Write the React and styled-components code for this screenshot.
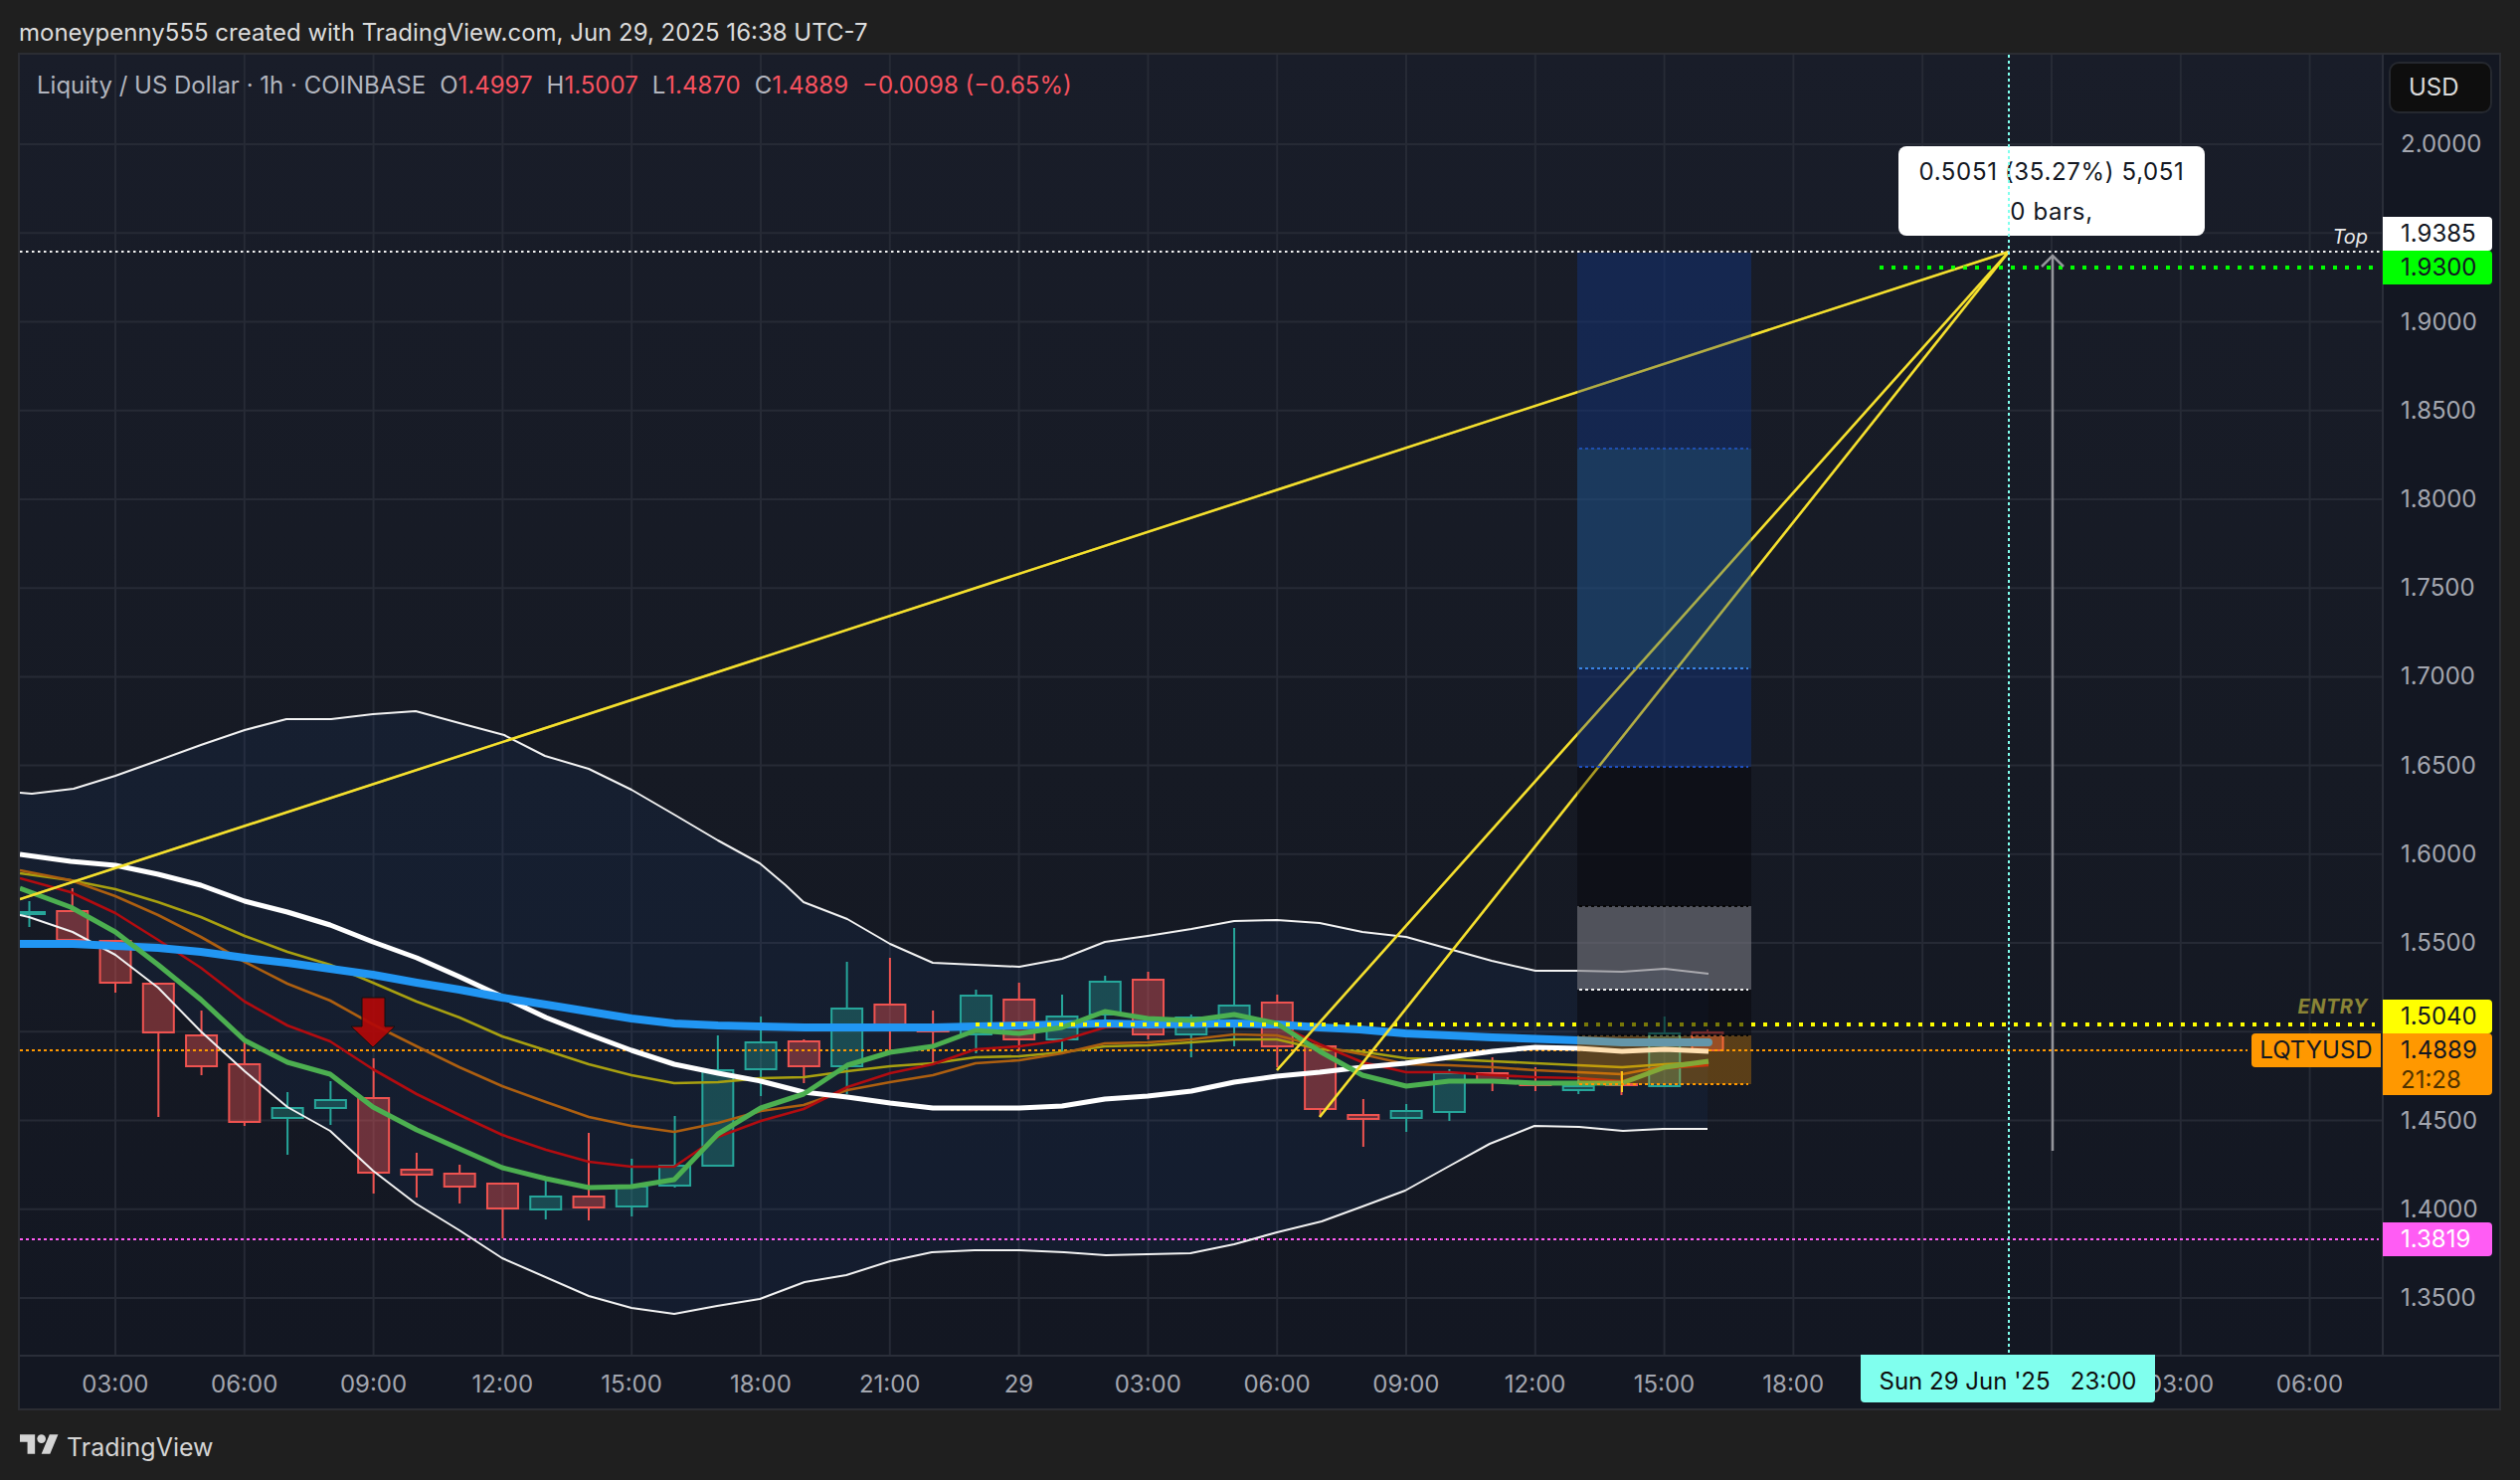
import React from "react"
import styled, { createGlobalStyle } from "styled-components"

const GlobalStyle = createGlobalStyle`
  html, body {
    margin: 0;
    background: #1f1f1f;
  }
  * {
    box-sizing: border-box;
  }
`

const hourX = (i) => 29.5 + 43.27 * i
const priceY = (k) => 145 + 89.23 * k

// [wick top, body top, body bottom, wick bottom, up?], one per hour starting at 01:00
const candles = [
  [906, 917, 919, 932, 1], [893, 916, 945, 945, 0], [946, 946, 988, 998, 0], [989, 989, 1038, 1123, 0],
  [1016, 1041, 1072, 1081, 0], [1047, 1070, 1128, 1132, 0], [1098, 1114, 1124, 1161, 1], [1087, 1106, 1114, 1131, 1],
  [1064, 1104, 1179, 1200, 0], [1159, 1176, 1181, 1204, 0], [1171, 1180, 1193, 1210, 0], [1190, 1190, 1215, 1245, 0],
  [1186, 1203, 1216, 1226, 1], [1139, 1203, 1214, 1227, 0], [1165, 1193, 1213, 1223, 1], [1122, 1172, 1192, 1194, 1],
  [1041, 1076, 1172, 1172, 1], [1022, 1048, 1075, 1102, 1], [1045, 1047, 1072, 1089, 0], [967, 1014, 1072, 1100, 1],
  [963, 1010, 1035, 1057, 0], [1016, 1036, 1037, 1069, 0], [995, 1001, 1040, 1059, 1], [988, 1005, 1045, 1056, 0],
  [1000, 1022, 1045, 1058, 1], [981, 987, 1020, 1027, 1], [977, 985, 1040, 1045, 0], [1020, 1023, 1040, 1063, 1],
  [933, 1011, 1030, 1052, 1], [1000, 1008, 1052, 1073, 0], [1052, 1052, 1115, 1123, 0], [1105, 1121, 1125, 1153, 0],
  [1110, 1117, 1124, 1138, 1], [1075, 1079, 1118, 1127, 1], [1063, 1079, 1087, 1097, 0], [1073, 1088, 1091, 1097, 0],
  [1082, 1092, 1096, 1100, 1], [1077, 1090, 1091, 1101, 0], [1022, 1039, 1092, 1092, 1], [1035, 1038, 1056, 1056, 0],
]

const upperBand = "20,797 32,798 74,793 116,780 158,765 202,749 246,734 288,723 333,723 375,718 418,715 462,727 507,739 548,760 592,773 635,794 678,819 722,845 764,868 790,890 808,907 852,924 895,949 938,968 981,970 1025,972 1068,964 1111,947 1154,941 1198,934 1241,926 1284,925 1327,928 1370,937 1414,942 1457,954 1500,966 1544,976 1587,976 1631,977 1674,974 1718,979"
const lowerBand = "20,920 29,922 73,937 116,960 159,993 202,1037 246,1077 289,1113 332,1137 375,1177 418,1210 462,1237 505,1265 592,1303 635,1315 678,1321 721,1313 764,1306 809,1289 851,1282 895,1268 937,1259 980,1257 1025,1257 1070,1259 1112,1262 1154,1261 1197,1260 1241,1251 1284,1239 1329,1228 1370,1213 1413,1197 1458,1172 1498,1150 1543,1132 1588,1133 1632,1137 1672,1135 1717,1135"
const basis = "20,859 71,866 116,870 159,879 202,890 246,906 289,917 332,930 375,947 419,963 462,982 505,1002 549,1023 592,1040 635,1056 678,1070 722,1079 765,1087 808,1098 852,1103 895,1109 938,1114 981,1114 1025,1114 1068,1112 1111,1105 1154,1102 1198,1097 1241,1088 1284,1082 1327,1078 1370,1073 1413,1069 1457,1063 1501,1057 1544,1053 1587,1054 1631,1057 1674,1055 1718,1057"
const longMa = "20,949 73,949 116,951 159,953 202,957 246,963 289,968 332,974 375,980 419,988 462,995 505,1003 549,1010 592,1017 635,1024 678,1029 722,1031 765,1032 809,1033 852,1033 938,1033 981,1032 1025,1031 1111,1029 1154,1030 1241,1029 1284,1030 1327,1033 1367,1035 1413,1039 1501,1043 1587,1046 1631,1048 1718,1048"
const greenMa = "20,893 71,912 116,937 159,970 202,1005 246,1046 289,1068 332,1080 375,1113 419,1136 462,1155 505,1174 549,1185 592,1194 635,1193 678,1186 722,1140 765,1114 808,1100 852,1071 895,1058 938,1052 981,1036 1025,1039 1068,1033 1111,1017 1154,1024 1198,1026 1241,1020 1284,1029 1327,1057 1370,1081 1414,1092 1457,1087 1501,1087 1544,1089 1587,1089 1631,1089 1674,1073 1718,1067"
const redMa = "20,883 71,897 116,918 159,945 202,973 246,1007 289,1031 332,1047 375,1075 419,1100 462,1121 505,1141 549,1156 592,1168 635,1173 678,1173 722,1143 765,1127 808,1115 852,1093 895,1079 938,1070 981,1055 1025,1052 1068,1046 1111,1033 1154,1030 1198,1029 1241,1027 1284,1030 1327,1050 1370,1068 1414,1078 1457,1078 1501,1081 1544,1083 1587,1084 1631,1087 1674,1074 1718,1071"
const brownMa = "20,875 71,885 116,901 159,920 202,942 246,967 289,989 332,1006 375,1030 419,1052 462,1073 505,1092 549,1108 592,1123 635,1132 678,1138 722,1129 765,1117 808,1111 852,1096 895,1088 938,1081 981,1069 1025,1066 1068,1059 1111,1049 1154,1048 1198,1045 1241,1040 1284,1041 1327,1052 1370,1060 1414,1070 1457,1071 1501,1073 1544,1076 1587,1078 1631,1080 1674,1072 1718,1069"
const oliveMa = "20,878 71,885 116,894 159,907 202,922 246,941 289,957 332,970 375,988 419,1007 462,1023 505,1042 549,1056 592,1070 635,1081 678,1089 722,1088 765,1084 808,1083 852,1077 895,1072 938,1069 981,1063 1025,1062 1068,1058 1111,1052 1154,1051 1198,1048 1241,1045 1284,1045 1327,1055 1367,1057 1414,1064 1457,1065 1501,1067 1544,1069 1587,1071 1631,1073 1674,1070 1718,1068"

// 1.9500 and 1.5000 sit behind the price tags, so they stay blank
const priceLabels = ["2.0000", "", "1.9000", "1.8500", "1.8000", "1.7500", "1.7000", "1.6500", "1.6000", "1.5500", "", "1.4500", "1.4000", "1.3500"]
// 21:00 and the 30th sit behind the cursor label
const timeLabels = ["03:00", "06:00", "09:00", "12:00", "15:00", "18:00", "21:00", "29", "03:00", "06:00", "09:00", "12:00", "15:00", "18:00", "", "", "03:00", "06:00"]

const Line = ({ points, color, width, cap = "butt" }) => (
  <polyline points={points} fill="none" stroke={color} strokeWidth={width} strokeLinejoin="round" strokeLinecap={cap} />
)

const Dots = ({ from, to, y, color, width = 2, dash = "3 3" }) => (
  <line x1={from} x2={to} y1={y} y2={y} stroke={color} strokeWidth={width} strokeDasharray={dash} />
)

const Candle = ({ i, data }) => {
  const [high, top, bottom, low, up] = data
  const x = hourX(i)
  const color = up ? "#26a69a" : "#ef5350"
  return (
    <g stroke={color} strokeWidth="2">
      <line x1={x} x2={x} y1={high} y2={top} />
      <line x1={x} x2={x} y1={bottom} y2={low} />
      <rect
        x={x - 15.5}
        y={top}
        width="31"
        height={bottom - top}
        fill={up ? "rgba(38,166,154,.33)" : "rgba(239,83,80,.4)"}
      />
    </g>
  )
}

const RayLines = ({ opacity }) => (
  <g stroke="#f5e02e" strokeWidth="2.5" fill="none" opacity={opacity}>
    <path d="M20 904L2020 253" />
    <path d="M1284 1076L2020 253" />
    <path d="M1327 1123L2020 253" />
  </g>
)

function ChartDrawing() {
  const reversedLower = lowerBand.split(" ").reverse().join(" ")
  return (
    <PlotSvg viewBox="20 55 2375 1307">
      <g stroke="#262a35" strokeWidth="2">
        {priceLabels.map((p, k) => (
          <line key={k} x1="20" x2="2395" y1={priceY(k)} y2={priceY(k)} />
        ))}
        {timeLabels.map((t, k) => (
          <line key={k} x1={116 + 129.8 * k} x2={116 + 129.8 * k} y1="55" y2="1362" />
        ))}
      </g>
      <polygon points={`${upperBand} ${reversedLower}`} fill="rgba(30,83,160,.1)" />
      {candles.map((c, i) => (
        <Candle key={i} i={i} data={c} />
      ))}
      <Dots from={20} to={2260} y={1056} color="#ff9800" />
      <Dots from={20} to={2392} y={1246} color="#ff5cf4" />
      <Line points={oliveMa} color="#a8a010" width="2.6" />
      <Line points={brownMa} color="#ad5f10" width="2.6" />
      <Line points={redMa} color="#b20c10" width="2.6" />
      <Line points={upperBand} color="#f2f2f2" width="2" />
      <Line points={lowerBand} color="#f2f2f2" width="2" />
      <Line points={basis} color="#ffffff" width="5" />
      <Line points={longMa} color="#2196f3" width="8" cap="round" />
      <Line points={greenMa} color="#4caf50" width="5" />
      <line x1="1631" x2="1631" y1="1077" y2="1098" stroke="#f5d020" strokeWidth="2" />
      <Dots from={981} to={2388} y={1030} color="#ffff00" width={4} dash="4 8" />
      <path
        d="M364 1003h23v29h10l-22 21-22-21h11z"
        fill="rgba(178,8,8,.92)"
        stroke="#111"
        strokeWidth="1"
      />
      <RayLines />
      <Dots from={20} to={2395} y={253} color="#f4f4f4" dash="2.5 3.5" />
      <Dots from={1890} to={2387} y={269} color="#00ff00" width={4} dash="4 8" />
      <g stroke="#94959b" strokeWidth="2.5" fill="none">
        <path d="M2064 1157V257" />
        <path d="M2053 268l11-11 11 11" />
      </g>
      <rect x="1586" y="254" width="175" height="197" fill="rgba(18,50,120,.5)" />
      <rect x="1586" y="451" width="175" height="221" fill="rgba(30,78,130,.6)" />
      <rect x="1586" y="672" width="175" height="99" fill="rgba(18,50,120,.5)" />
      <rect x="1586" y="771" width="175" height="140" fill="rgba(10,10,15,.55)" />
      <rect x="1586" y="911" width="175" height="84" fill="rgba(120,120,128,.6)" />
      <rect x="1586" y="995" width="175" height="46" fill="rgba(10,10,15,.55)" />
      <rect x="1586" y="1041" width="175" height="49" fill="rgba(255,152,0,.3)" />
      <RayLines opacity=".42" />
      <Dots from={1588} to={1758} y={451} color="#1f4fb0" />
      <Dots from={1588} to={1758} y={672} color="#3a84e4" />
      <Dots from={1588} to={1758} y={771} color="#1f4fc0" />
      <Dots from={1588} to={1758} y={911} color="#050505" />
      <Dots from={1588} to={1758} y={995} color="#f0f0f0" />
      <Dots from={1588} to={1758} y={1041} color="#050505" />
      <Dots from={1588} to={1758} y={1090} color="#ff9800" />
    </PlotSvg>
  )
}

export default function App() {
  return (
    <Page>
      <GlobalStyle />
      <Header>moneypenny555 created with TradingView.com, Jun 29, 2025 16:38 UTC-7</Header>
      <Frame>
        <ChartRow>
          <Plot>
            <ChartDrawing />
            <Legend>
              <span>Liquity / US Dollar · 1h · COINBASE</span>
              <Ohlc>O<b>1.4997</b></Ohlc>
              <Ohlc>H<b>1.5007</b></Ohlc>
              <Ohlc>L<b>1.4870</b></Ohlc>
              <Ohlc>C<b>1.4889</b></Ohlc>
              <b>−0.0098 (−0.65%)</b>
            </Legend>
            <Measure>
              <div>0.5051 (35.27%) 5,051</div>
              <div>0 bars,</div>
            </Measure>
            <Crosshair />
            <LineNote $top={169} $color="#e8e8e8">Top</LineNote>
            <LineNote $top={943} $color="#8a8436" $bold>ENTRY</LineNote>
            <SymbolTag>LQTYUSD</SymbolTag>
          </Plot>
          <PriceAxis>
            <CurrencyButton>USD</CurrencyButton>
            {priceLabels.map((p, k) => (
              <PriceLabel key={k}>{p}</PriceLabel>
            ))}
            <PriceTag $top={163} $height={34} $bg="#ffffff">1.9385</PriceTag>
            <PriceTag $top={197} $height={34} $bg="#00ff00">1.9300</PriceTag>
            <PriceTag $top={950} $height={34} $bg="#ffff00">1.5040</PriceTag>
            <PriceTag $top={984} $height={62} $bg="#ff9800">
              1.4889
              <Countdown>21:28</Countdown>
            </PriceTag>
            <PriceTag $top={1174} $height={34} $bg="#ff5cf4" $color="#ffffff">1.3819</PriceTag>
          </PriceAxis>
        </ChartRow>
        <TimeAxis>
          {timeLabels.map((t, k) => (
            <TimeLabel key={k}>{t}</TimeLabel>
          ))}
          <CursorTime>Sun 29 Jun '25&nbsp;&nbsp;&nbsp;23:00</CursorTime>
        </TimeAxis>
      </Frame>
      <Footer>
        <svg width="39" height="20" viewBox="0 4 36 18" fill="#d4d4d4">
          <path d="M14 22H7V11H0V4h14v18zM28 22h-8l7.5-18h8L28 22z" />
          <circle cx="20" cy="8" r="4" />
        </svg>
        <FooterName>TradingView</FooterName>
      </Footer>
    </Page>
  )
}

const Page = styled.div`
  width: 2534px;
  height: 1488px;
  background: #1f1f1f;
  font-family: Inter, "Liberation Sans", sans-serif;
  display: flex;
  flex-direction: column;
  overflow: hidden;
`

const Header = styled.div`
  height: 53px;
  padding: 11px 0 0 19px;
  display: flex;
  align-items: center;
  font-size: 24px;
  color: #dcdcdc;
`

const Frame = styled.div`
  margin-left: 18px;
  width: 2497px;
  height: 1365px;
  border: 2px solid #2b2d33;
  background: #131722;
  display: flex;
  flex-direction: column;
`

const ChartRow = styled.div`
  display: flex;
  height: 1307px;
`

const Plot = styled.div`
  position: relative;
  width: 2375px;
  background: linear-gradient(180deg, #191d29 0%, #161a24 55%, #131722 100%);
`

const PlotSvg = styled.svg`
  display: block;
  width: 100%;
  height: 100%;
`

const Legend = styled.div`
  position: absolute;
  left: 17px;
  top: 16px;
  display: flex;
  gap: 14px;
  line-height: 30px;
  font-size: 24px;
  color: #b2b5be;

  b {
    font-weight: 400;
    color: #f7525f;
  }
`

const Ohlc = styled.span`
  display: inline-flex;
`

const Measure = styled.div`
  position: absolute;
  left: 1889px;
  top: 92px;
  width: 308px;
  height: 90px;
  border-radius: 8px;
  background: #ffffff;
  color: #131722;
  font-size: 24px;
  letter-spacing: 0.65px;
  line-height: 40px;
  text-align: center;
  padding-top: 6px;
`

const Crosshair = styled.div`
  position: absolute;
  left: 1999px;
  top: 0;
  bottom: 0;
  width: 2px;
  background: repeating-linear-gradient(180deg, #80ffee 0 3px, transparent 3px 6px);
`

const LineNote = styled.div`
  position: absolute;
  right: 14px;
  top: ${(p) => p.$top}px;
  font-size: 20px;
  line-height: 28px;
  font-style: italic;
  letter-spacing: ${(p) => (p.$bold ? "0.5px" : "0")};
  font-weight: ${(p) => (p.$bold ? 700 : 400)};
  color: ${(p) => p.$color};
`

const SymbolTag = styled.div`
  position: absolute;
  right: 1px;
  top: 984px;
  width: 130px;
  height: 34px;
  border-radius: 4px 0 0 4px;
  background: #ff9800;
  color: #131722;
  font-size: 24px;
  line-height: 34px;
  text-align: center;
`

const PriceAxis = styled.div`
  position: relative;
  width: 118px;
  border-left: 2px solid #2a2e39;
  padding: 45px 0 0 17px;
`

const CurrencyButton = styled.div`
  position: absolute;
  left: 5px;
  top: 7px;
  width: 104px;
  height: 52px;
  padding-left: 18px;
  border-radius: 10px;
  border: 2px solid #25282f;
  background: #0e0e0e;
  color: #dbdbdb;
  font-size: 24px;
  line-height: 48px;
`

const PriceLabel = styled.div`
  height: 89.23px;
  display: flex;
  align-items: center;
  font-size: 24px;
  color: #a3a6af;
`

const PriceTag = styled.div`
  position: absolute;
  left: -1px;
  top: ${(p) => p.$top}px;
  width: 110px;
  height: ${(p) => p.$height}px;
  padding-left: 18px;
  border-radius: 0 4px 4px 0;
  background: ${(p) => p.$bg};
  color: ${(p) => p.$color || "#131722"};
  font-size: 24px;
  line-height: 34px;
`

const Countdown = styled.div`
  line-height: 26px;
  color: #4f3200;
`

const TimeAxis = styled.div`
  position: relative;
  flex: 1;
  display: flex;
  align-items: center;
  padding: 2px 0 0 31px;
  border-top: 2px solid #2a2e39;
`

const TimeLabel = styled.div`
  flex: 0 0 129.8px;
  text-align: center;
  font-size: 24px;
  color: #a3a6af;
`

const CursorTime = styled.div`
  position: absolute;
  left: 1851px;
  top: -2px;
  width: 296px;
  height: 48px;
  border-radius: 0 0 4px 4px;
  background: #80ffee;
  color: #0e0e0e;
  font-size: 24px;
  line-height: 54px;
  text-align: center;
`

const Footer = styled.div`
  display: flex;
  align-items: flex-start;
  gap: 8px;
  margin-left: 20px;
  padding-top: 24px;
`

const FooterName = styled.div`
  font-size: 25px;
  line-height: 26px;
  color: #d4d4d4;
`
